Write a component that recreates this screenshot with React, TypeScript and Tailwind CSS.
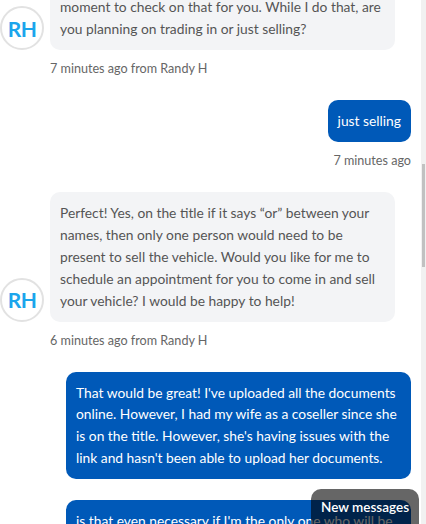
import React from "react";

type Msg = {
  id: number;
  from: "agent" | "me";
  text: React.ReactNode;
  stamp?: string;
};

const messages: Msg[] = [
  {
    id: 1,
    from: "agent",
    text: (
      <>
        Great question! Give me just a quick
        <br />
        moment to check on that for you. While I do that, are you planning on trading in or just selling?
      </>
    ),
    stamp: "7 minutes ago from Randy H",
  },
  { id: 2, from: "me", text: "just selling", stamp: "7 minutes ago" },
  {
    id: 3,
    from: "agent",
    text: "Perfect! Yes, on the title if it says \u201cor\u201d between your names, then only one person would need to be present to sell the vehicle. Would you like for me to schedule an appointment for you to come in and sell your vehicle? I would be happy to help!",
    stamp: "6 minutes ago from Randy H",
  },
  {
    id: 4,
    from: "me",
    text: "That would be great! I've uploaded all the documents online. However, I had my wife as a coseller since she is on the title. However, she's having issues with the link and hasn't been able to upload her documents.",
  },
  {
    id: 5,
    from: "me",
    text: "is that even necessary if I'm the only one who will be there to sell the vehicle?",
  },
];

function Avatar() {
  return (
    <div className="w-[44px] h-[44px] shrink-0 rounded-full border-2 border-[#e2e2e2] bg-white flex items-center justify-center">
      <span className="text-[21px] font-bold text-[#1ba5ec] leading-none tracking-[-0.5px]">RH</span>
    </div>
  );
}

export default function App() {
  return (
    <div
      className="relative w-[426px] h-[524px] overflow-hidden bg-white flex"
      style={{ fontFamily: "Lato, 'Open Sans', sans-serif" }}
    >
      {/* Conversation */}
      <div className="flex-1 pr-[10px]">
        <div className="-mt-[36px] flex flex-col">
          {messages.map((m) =>
            m.from === "agent" ? (
              <div key={m.id} className="mb-[22px]">
                <div className="flex items-end gap-[6px]">
                  <Avatar />
                  <div className="max-w-[345px] rounded-[10px] bg-[#f3f4f6] px-[10px] py-[10px] text-[13.8px] leading-[22px] text-[#555]">
                    {m.text}
                  </div>
                </div>
                {m.stamp && (
                  <p className="mt-[10px] pl-[50px] text-[12.6px] leading-[18px] text-[#666]">{m.stamp}</p>
                )}
              </div>
            ) : (
              <div key={m.id} className={`${m.stamp ? "mb-[22px]" : "mb-[21px]"} flex flex-col items-end`}>
                <div className="max-w-[345px] rounded-[10px] bg-[#0059b8] px-[10px] py-[10px] text-[13.8px] leading-[21.7px] text-white">
                  {m.text}
                </div>
                {m.stamp && (
                  <p className="mt-[10px] text-[12.6px] leading-[18px] text-[#666]">{m.stamp}</p>
                )}
              </div>
            )
          )}
        </div>
      </div>

      {/* Scrollbar */}
      <div className="w-[5px] shrink-0 bg-[#f1f1f1]">
        <div className="mt-[164px] ml-[1px] w-[3px] h-[103px] bg-[#c1c1c1]" />
      </div>

      {/* New messages pill */}
      <div className="absolute left-[311px] top-[489px] w-[108px] h-[44px] rounded-[10px] bg-black/60 pl-[10px] pt-[5px]">
        <span className="text-[13.5px] leading-[20px] font-semibold text-white">New messages</span>
      </div>
    </div>
  );
}
